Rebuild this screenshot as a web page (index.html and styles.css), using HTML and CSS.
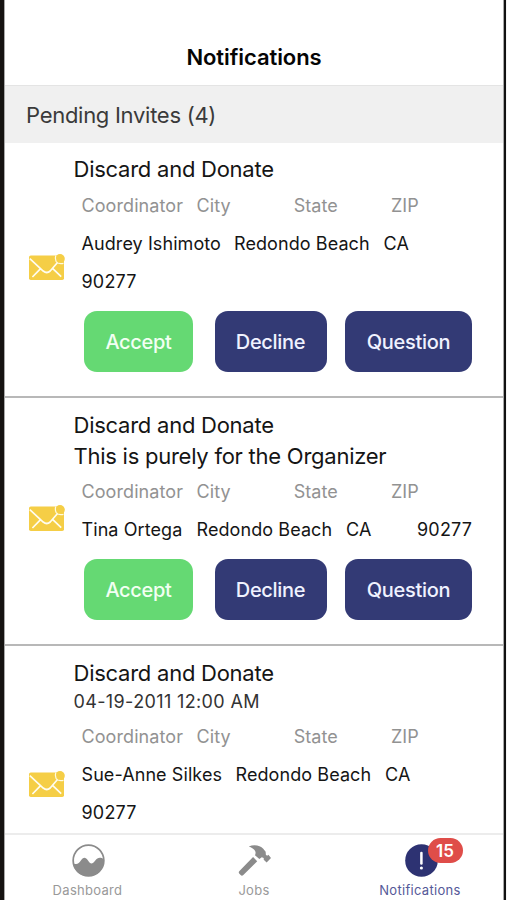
FILE: index.html
```html
<!DOCTYPE html>
<html lang="en">
<head>
<meta charset="utf-8">
<title>Notifications</title>
<link rel="stylesheet" href="styles.css">
</head>
<body>
<svg class="defs" width="0" height="0" aria-hidden="true">
  <symbol id="mail" viewBox="0 0 36 27">
    <rect x="0" y="1.500" width="35" height="24.500" rx="1.8" fill="#f5ce46"/>
    <path d="M.8 4.600 14.200 17q3.600 3 7 0L28.500 8.500M11.600 14.600 3.400 23M23.800 14.600l8.400 8" fill="none" stroke="#fffdf0" stroke-width="1.700"/>
    <circle cx="31" cy="4.800" r="4.800" fill="#f5ce46"/>
    <path d="M26.800 1.500Q25.800 4 27 7.200 29 10.500 34.500 9.400" fill="none" stroke="#fffbe0" stroke-width="1.200"/>
  </symbol>
</svg>
<div class="phone">
  <header class="header"><h1 class="heading">Notifications</h1></header>
  <h2 class="section"><span class="section-text">Pending Invites (4)</span></h2>
  <main class="list">
    <article class="invite first">
      <div class="icon-col"><svg class="mail"><use href="#mail"/></svg></div>
      <div class="content">
        <h3 class="title">Discard and Donate</h3>
        <div class="row labels"><span class="c1">Coordinator</span><span class="c2">City</span><span class="c2">State</span><span>ZIP</span></div>
        <div class="row values"><span class="name-audrey">Audrey Ishimoto</span><span class="city">Redondo Beach</span><span class="state">CA</span><span class="zip">90277</span></div>
        <div class="actions"><button class="btn accept">Accept</button><button class="btn decline">Decline</button><button class="btn question">Question</button></div>
      </div>
    </article>
    <article class="invite second">
      <div class="icon-col"><svg class="mail"><use href="#mail"/></svg></div>
      <div class="content">
        <h3 class="title">Discard and Donate</h3>
        <p class="title subtitle">This is purely for the Organizer</p>
        <div class="row labels"><span class="c1">Coordinator</span><span class="c2">City</span><span class="c2">State</span><span>ZIP</span></div>
        <div class="row values"><span class="c1">Tina Ortega</span><span class="city">Redondo Beach</span><span class="state-short">CA</span><span class="zip">90277</span></div>
        <div class="actions"><button class="btn accept">Accept</button><button class="btn decline">Decline</button><button class="btn question">Question</button></div>
      </div>
    </article>
    <article class="invite third">
      <div class="icon-col"><svg class="mail"><use href="#mail"/></svg></div>
      <div class="content">
        <h3 class="title">Discard and Donate</h3>
        <p class="date">04-19-2011 12:00 AM</p>
        <div class="row labels"><span class="c1">Coordinator</span><span class="c2">City</span><span class="c2">State</span><span>ZIP</span></div>
        <div class="row values"><span class="name-sue">Sue-Anne Silkes</span><span class="city">Redondo Beach</span><span class="state">CA</span><span class="zip">90277</span></div>
      </div>
    </article>
  </main>
  <nav class="tabs">
    <a class="tab">
      <svg class="tab-icon" viewBox="0 0 34 34"><circle cx="17" cy="17" r="15.800" fill="#fff" stroke="#8b8b8b" stroke-width="1.800"/><path d="M1.500 20C5 21.500 7 20.500 9.500 16.500 12 13.200 14 13.200 16.500 17c2.500 4.200 4.500 4.200 7.500 0 2.500-3.400 5-3.500 9-1.500C33.500 25 27 33 17 33S1.500 26 1.500 20Z" fill="#8b8b8b"/></svg>
      <span class="tab-label dash">Dashboard</span>
    </a>
    <a class="tab">
      <svg class="tab-icon" viewBox="0 0 34 34"><path d="M11 2.500C17 0 23 1.500 26 5L28.500 8 28.700 11 30 12 31.300 11 34 14.500 29.500 19 26.500 16.300 26.500 14.500 24.500 13.700 22 15.500 17.500 11.500C19.500 7.500 16.500 4.500 11 2.500ZM15.500 13.500 19.800 17.700 5.500 32Q4 33.300 2.700 32L1.200 30.500Q.2 29 1.500 27.700Z" fill="#8b8b8b"/></svg>
      <span class="tab-label">Jobs</span>
    </a>
    <a class="tab active">
      <span class="icon-wrap">
        <svg class="tab-icon" viewBox="0 0 34 34"><circle cx="17" cy="17" r="16.800" fill="#2d3272"/><path d="M16.900 9.200v11" stroke="#fff" stroke-width="2.600" stroke-linecap="round"/><circle cx="16.900" cy="24.700" r="1.600" fill="#fff"/></svg>
        <span class="badge">15</span>
      </span>
      <span class="tab-label">Notifications</span>
    </a>
  </nav>
</div>
</body>
</html>
```

FILE: styles.css
```css
* { box-sizing: border-box; }
body { margin: 0; background: #f4f4f4; font-family: Inter, "Liberation Sans", sans-serif; color: #151515; }
h1, h2, h3, p { margin: 0; font-weight: 400; }
.defs { display: block; height: 0; }
.phone { width: 506px; height: 900px; padding: 0 1px; border-left: 4px solid #151311; border-right: 2px solid #111; background: #a8a8a8; display: flex; flex-direction: column; overflow: hidden; }
.header { height: 85px; flex: none; padding-top: 42px; text-align: center; background: #fff; }
.heading { font-size: 22px; line-height: 30px; font-weight: 600; color: #050505; letter-spacing: -0.08px; }
.section { height: 58px; flex: none; padding-left: 21px; border-top: 1px solid #e4e4e4; background: #f0f0f0; font-size: 22px; line-height: 58px; color: #3a3a3a; letter-spacing: -0.28px; }
.list { flex: 1; min-height: 0; overflow: hidden; background: #fff; }
.invite { display: flex; border-bottom: 2px solid #b8b8b8; }
.first { height: 255px; padding-top: 11px; }
.second { height: 248px; padding-top: 12px; }
.third { height: 255px; padding-top: 12px; }
.icon-col { width: 68px; flex: none; padding-left: 24px; }
.mail { display: block; width: 36px; height: 27px; margin-top: 100px; }
.second .mail { margin-top: 95px; }
.third .mail { margin-top: 113px; }
.content { flex: 1; padding-left: 0.5px; }
.title { font-size: 22px; line-height: 31px; letter-spacing: -0.25px; }
.first .title { margin-bottom: 2px; }
.subtitle { margin-bottom: 1px; }
.date { font-size: 18px; line-height: 26px; margin-bottom: 3px; letter-spacing: 0.37px; color: #333; }
.row { display: flex; flex-wrap: wrap; width: 400px; padding-left: 8px; font-size: 18px; line-height: 37.8px; white-space: nowrap; letter-spacing: 0.08px; }
.labels { color: #929292; }
.zip { letter-spacing: 0.2px; }
.c1 { width: 115px; }
.c2 { width: 97.2px; }
.name-audrey { width: 152.5px; }
.name-sue { width: 154px; }
.city { width: 149.5px; }
.state { width: 88px; }
.state-short { width: 71px; }
.actions { display: flex; margin: 10.7px 0 0 10.5px; }
.btn { height: 61px; padding: 2px 0 0; border: 0; border-radius: 13px; font: 500 20px/59px Inter, "Liberation Sans", sans-serif; letter-spacing: -0.3px; color: #f0f2ff; background: #333a75; }
.accept { width: 109px; margin-right: 21.5px; background: #65d973; color: #f2fff2; }
.decline { width: 112px; margin-right: 18.5px; }
.question { width: 127px; }
.tabs { height: 67px; flex: none; display: flex; border-top: 2px solid #ececec; background: #fff; }
.tab { flex: 1; display: flex; flex-direction: column; align-items: center; padding-top: 9px; color: #999; }
.tab-icon { display: block; width: 33px; height: 33px; }
.icon-wrap { position: relative; padding-left: 2px; }
.badge { position: absolute; left: 25px; top: -6px; width: 35px; height: 25px; border-radius: 13px; background: #df4d49; color: #fff; font-size: 17px; font-weight: 600; line-height: 26px; text-align: center; }
.tab-label { margin-top: 4px; font-size: 13px; line-height: 18px; letter-spacing: 0.3px; }
.dash { margin-right: 1px; }
.active { color: #555998; }
```
